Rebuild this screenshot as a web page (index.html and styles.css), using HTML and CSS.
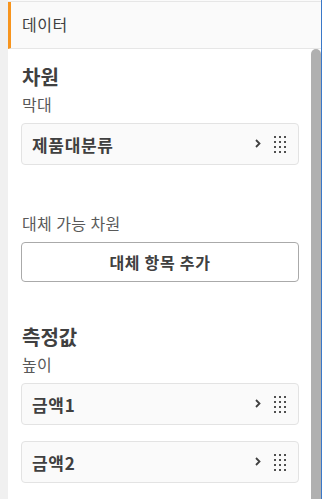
FILE: index.html
```html
<!DOCTYPE HTML>
<html>
<head>
  <title>데이터 패널</title>
  <meta charset="utf-8">
  <link rel="stylesheet" href="styles.css">
</head>
<body>
  <div class="panel">
    <div class="topband"></div>
    <div class="tab">데이터</div>
    <div class="body">
      <div class="content">
        <h2 class="section-title">차원</h2>
        <div class="label">막대</div>
        <div class="item">
          <span class="item-name">제품대분류</span>
          <svg class="chev" width="6" height="9" viewBox="0 0 6 9"><polyline points="1,1 4.5,4.5 1,8" fill="none" stroke="#404040" stroke-width="1.8"/></svg>
          <span class="grip"><i></i><i></i><i></i><i></i><i></i><i></i><i></i><i></i><i></i><i></i><i></i><i></i></span>
        </div>

        <div class="label alt">대체 가능 차원</div>
        <button class="add">대체 항목 추가</button>

        <h2 class="section-title measures">측정값</h2>
        <div class="label">높이</div>
        <div class="item">
          <span class="item-name">금액1</span>
          <svg class="chev" width="6" height="9" viewBox="0 0 6 9"><polyline points="1,1 4.5,4.5 1,8" fill="none" stroke="#404040" stroke-width="1.8"/></svg>
          <span class="grip"><i></i><i></i><i></i><i></i><i></i><i></i><i></i><i></i><i></i><i></i><i></i><i></i></span>
        </div>
        <div class="item">
          <span class="item-name">금액2</span>
          <svg class="chev" width="6" height="9" viewBox="0 0 6 9"><polyline points="1,1 4.5,4.5 1,8" fill="none" stroke="#404040" stroke-width="1.8"/></svg>
          <span class="grip"><i></i><i></i><i></i><i></i><i></i><i></i><i></i><i></i><i></i><i></i><i></i><i></i></span>
        </div>
      </div>
      <div class="scrollbar"></div>
    </div>
  </div>
</body>
</html>
```

FILE: styles.css
```css
html, body{
  margin: 0; padding: 0; width: 100%; height: 100%;
}
body{
 background-color: #f0f0f0;
 color: #404040;
 font-family: "Noto Sans CJK KR", "Noto Sans", sans-serif;
 overflow: hidden;
}
.panel{
 margin-left: 8px;
 height: 100%;
 background: #fff;
 border-right: 1px solid #3a78c8;
 display: flex;
 flex-direction: column;
}
.topband{
 height: 9px;
 background: #fafafa;
 border-bottom: 1px solid #e6e6e6;
}
.tab{
 height: 44px;
 padding-bottom: 2px;
 background: #fafafa;
 border-left: 3px solid #f7941d;
 border-bottom: 1px solid #e6e6e6;
 padding-left: 11px;
 font-size: 16px;
 letter-spacing: 0.5px;
 line-height: 44px;
 color: #404040;
}
.body{
 flex: 1;
 display: flex;
}
.content{
 flex: 1;
 padding: 14px 12px 0 13px;
}
.scrollbar{
 width: 10px;
 background: #b0b0b0;
 border-radius: 5px 5px 0 0;
}
.section-title{
 margin: 0;
 font-size: 20px;
 font-weight: bold;
 line-height: 28px;
 padding-left: 1px;
}
.measures{
 margin-top: 41px;
}
.label{
 font-size: 16px;
 line-height: 22px;
 letter-spacing: 0.4px;
 color: #595959;
 padding-left: 1px;
 margin-top: 2px;
 margin-bottom: 8px;
}
.label.alt{
 margin-top: 47px;
 margin-bottom: 8px;
}
.item{
 height: 40px;
 border: 1px solid #e3e3e3;
 border-radius: 4px;
 background: #fafafa;
 display: flex;
 align-items: center;
 padding: 0 12px 0 10px;
 margin-bottom: 16px;
}
.item-name{
 flex: 1;
 font-size: 17px;
 font-weight: bold;
 letter-spacing: 0.7px;
 color: #404040;
}
.chev{
 display: block;
 margin-right: 13px;
 margin-top: -1px;
}
.grip{
 display: grid;
 grid-template-columns: repeat(3, 2px);
 grid-template-rows: repeat(4, 2px);
 gap: 3px;
}
.grip i{
 width: 2px;
 height: 2px;
 background: #505050;
}
.add{
 display: block;
 width: 100%;
 height: 40px;
 border: 1px solid #aaa;
 border-radius: 4px;
 background: #fff;
 font-family: "Noto Sans CJK KR", "Noto Sans", sans-serif;
 font-size: 16px;
 font-weight: bold;
 letter-spacing: 0.7px;
 color: #404040;
 padding: 0;
}
```
